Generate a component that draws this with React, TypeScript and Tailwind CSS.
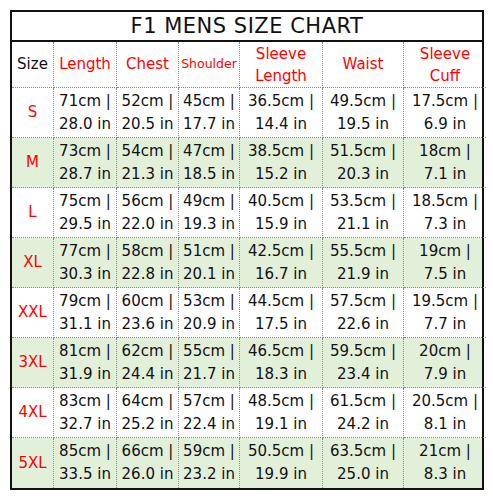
const rows = [
  ["S", "71cm", "28.0", "52cm", "20.5", "45cm", "17.7", "36.5cm", "14.4", "49.5cm", "19.5", "17.5cm", "6.9"],
  ["M", "73cm", "28.7", "54cm", "21.3", "47cm", "18.5", "38.5cm", "15.2", "51.5cm", "20.3", "18cm", "7.1"],
  ["L", "75cm", "29.5", "56cm", "22.0", "49cm", "19.3", "40.5cm", "15.9", "53.5cm", "21.1", "18.5cm", "7.3"],
  ["XL", "77cm", "30.3", "58cm", "22.8", "51cm", "20.1", "42.5cm", "16.7", "55.5cm", "21.9", "19cm", "7.5"],
  ["XXL", "79cm", "31.1", "60cm", "23.6", "53cm", "20.9", "44.5cm", "17.5", "57.5cm", "22.6", "19.5cm", "7.7"],
  ["3XL", "81cm", "31.9", "62cm", "24.4", "55cm", "21.7", "46.5cm", "18.3", "59.5cm", "23.4", "20cm", "7.9"],
  ["4XL", "83cm", "32.7", "64cm", "25.2", "57cm", "22.4", "48.5cm", "19.1", "61.5cm", "24.2", "20.5cm", "8.1"],
  ["5XL", "85cm", "33.5", "66cm", "26.0", "59cm", "23.2", "50.5cm", "19.9", "63.5cm", "25.0", "21cm", "8.3"],
];

const cols = "grid grid-cols-[42px_63px_62px_61px_83px_81px_82px]";
const cell = "border-r border-b border-dotted border-[#8a8a8a] flex flex-col items-center justify-center";

export default function App() {
  return (
    <div className="w-[493px] h-[500px] bg-white pt-[10px] pl-[10px] font-['Comic_Sans_MS','DejaVu_Sans',sans-serif] text-[#111]">
      <div className="w-[474px] border-2 border-[#111]">
        <div className="h-[30px] border-b-2 border-[#111] flex items-center justify-center text-[21px] leading-none tracking-[0.5px]">
          F1 MENS SIZE CHART
        </div>
        <div className={cols + " h-[46px]"}>
          <div className={cell + " text-[15px]"}>Size</div>
          <div className={cell + " text-[15px] text-[#ff0000]"}>Length</div>
          <div className={cell + " text-[15px] text-[#ff0000]"}>Chest</div>
          <div className={cell + " text-[12.5px] text-[#ff0000]"}>Shoulder</div>
          <div className={cell + " text-[15px] leading-[22px] text-[#ff0000]"}>
            <span>Sleeve</span>
            <span>Length</span>
          </div>
          <div className={cell + " text-[15px] text-[#ff0000]"}>Waist</div>
          <div className={cell + " border-r-0 text-[15px] leading-[22px] text-[#ff0000]"}>
            <span>Sleeve</span>
            <span>Cuff</span>
          </div>
        </div>
        {rows.map((r, i) => (
          <div key={r[0]} className={cols + " h-[50px] " + (i % 2 === 1 ? "bg-[#e2efd9]" : "bg-white")}>
            <div className={cell + " text-[15px] text-[#ff0000] " + (i === 7 ? "border-b-0" : "")}>{r[0]}</div>
            {[1, 3, 5, 7, 9, 11].map((k, j) => (
              <div
                key={k}
                className={
                  cell +
                  " text-[15px] leading-[23px] " +
                  (j === 5 ? "border-r-0 " : "") +
                  (i === 7 ? "border-b-0" : "")
                }
              >
                <span>{r[k]} |</span>
                <span>{r[k + 1]} in</span>
              </div>
            ))}
          </div>
        ))}
      </div>
    </div>
  );
}
